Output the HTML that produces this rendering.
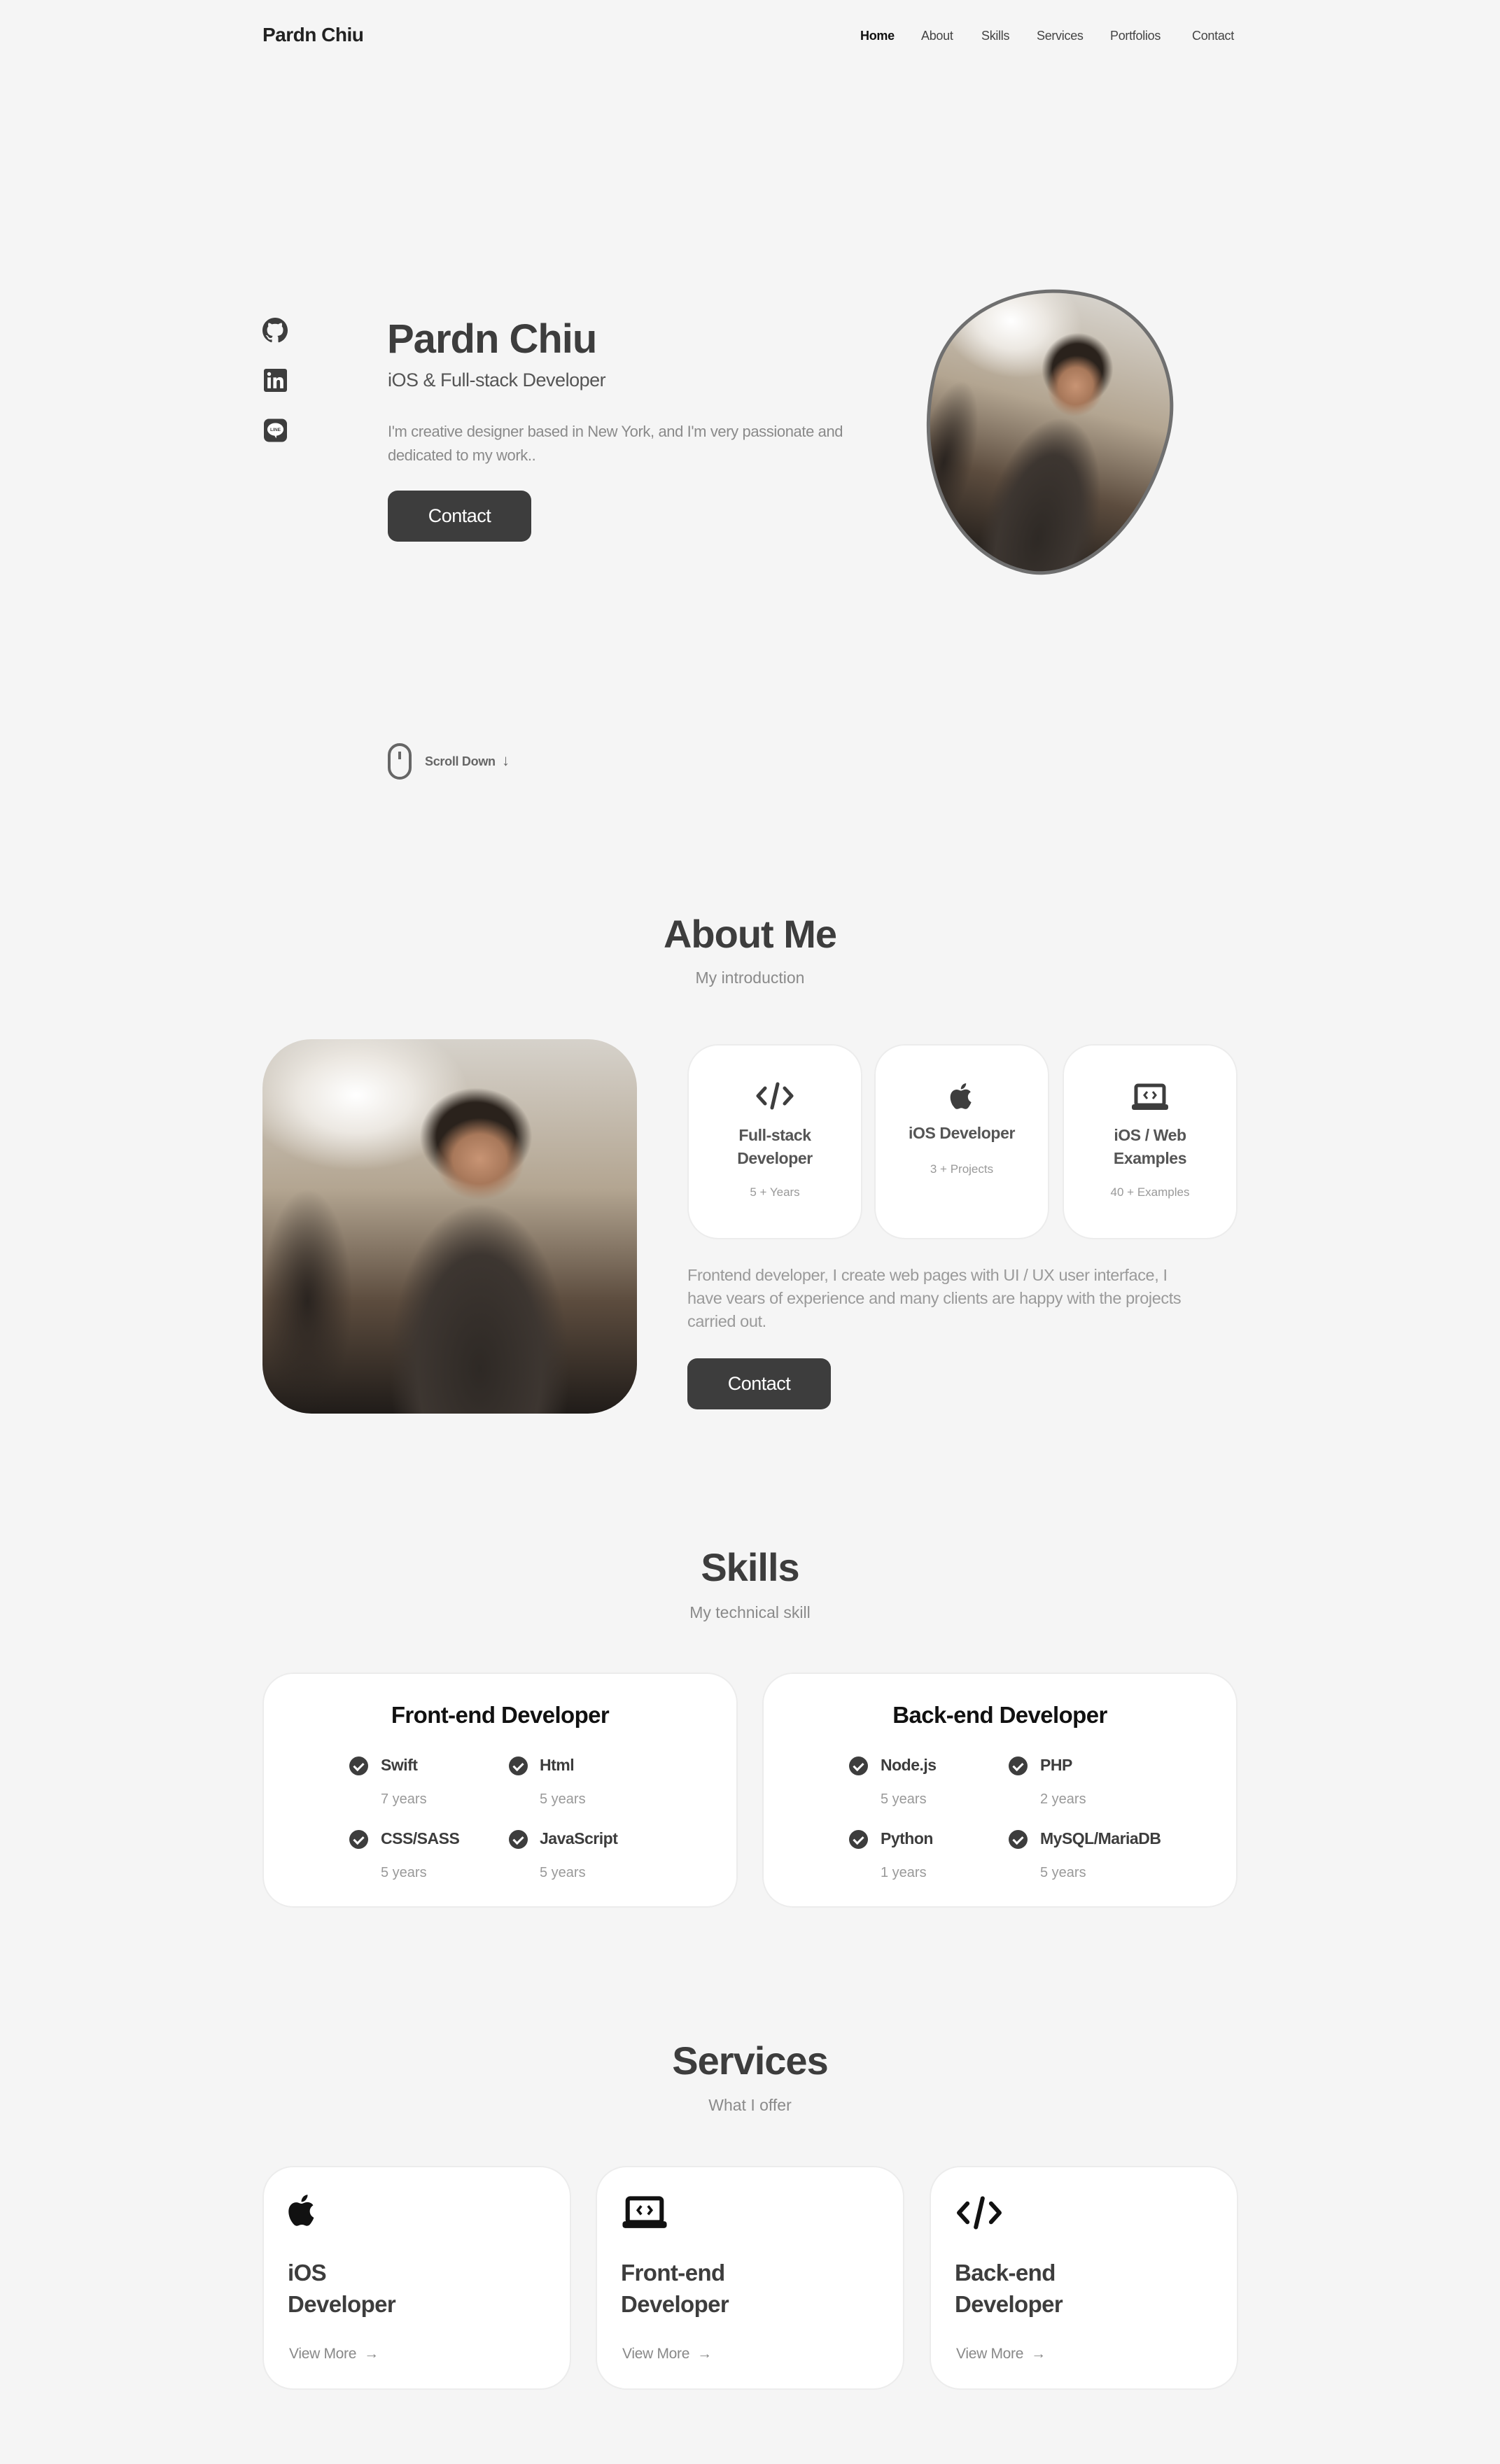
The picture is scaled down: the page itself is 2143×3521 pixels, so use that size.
<!DOCTYPE html>
<html><head><meta charset="utf-8"><style>
*{margin:0;padding:0;box-sizing:border-box}
body{width:2143px;height:3521px;background:#f5f5f5;font-family:"Liberation Sans",sans-serif;color:#3d3d3d;position:relative;overflow:hidden}
.a{position:absolute;white-space:nowrap}
.nav a{position:absolute;top:41px;font-size:18px;color:#444;text-decoration:none;letter-spacing:-0.3px}
.btn{position:absolute;background:#3d3d3d;color:#fff;border-radius:14px;font-size:27px;display:flex;align-items:center;justify-content:center;letter-spacing:-0.5px}
.card{position:absolute;background:#fff;border-radius:44px;border:2px solid #ececec}
.ct{position:absolute;left:0;right:0;text-align:center}
.h2{position:absolute;left:0;width:2143px;text-align:center;font-size:56px;font-weight:bold;letter-spacing:-1px;color:#3d3d3d}
.sub{position:absolute;left:0;width:2143px;text-align:center;font-size:23px;color:#8a8a8a}
.chk{position:absolute;width:27px;height:27px;border-radius:50%;background:#3d3d3d}
.chk:after{content:"";position:absolute;left:9px;top:6px;width:6px;height:11px;border:solid #fff;border-width:0 3px 3px 0;transform:rotate(45deg)}
.sn{position:absolute;font-size:23px;font-weight:bold;color:#3d3d3d;letter-spacing:-0.5px}
.sy{position:absolute;font-size:20px;color:#999}
.photo{background:
radial-gradient(ellipse 12% 11% at 58% 32%,#c89474 0,#a8785a 60%,transparent 100%),
radial-gradient(ellipse 15% 13% at 57% 26%,#2a221c 0,#2a221c 70%,transparent 100%),
radial-gradient(ellipse 30% 55% at 58% 88%,#2e2925 0,#3d3631 55%,transparent 80%),
radial-gradient(ellipse 12% 30% at 12% 70%,#2a2420 0,transparent 100%),
radial-gradient(ellipse 30% 20% at 25% 15%,#fff 0,#ece8e2 50%,transparent 100%),
linear-gradient(180deg,#d6d2cb 0%,#b3a591 40%,#5c4c3e 70%,#201c19 100%)}
</style></head><body>
<div class="a" style="left:375px;top:34px;font-size:28px;font-weight:bold;color:#222;letter-spacing:-0.5px">Pardn Chiu</div>
<div class="nav">
<a style="left:1229px;font-weight:bold;color:#111">Home</a>
<a style="left:1316px">About</a>
<a style="left:1402px">Skills</a>
<a style="left:1481px">Services</a>
<a style="left:1586px">Portfolios</a>
<a style="left:1703px">Contact</a>
</div>

<svg class="a" style="left:375px;top:454px" width="36" height="36" viewBox="0 0 16 16"><path fill="#3d3d3d" d="M8 0C3.58 0 0 3.58 0 8c0 3.54 2.29 6.53 5.47 7.59.4.07.55-.17.55-.38v-1.33c-2.23.48-2.7-1.07-2.7-1.07-.36-.92-.89-1.17-.89-1.17-.73-.5.05-.49.05-.49.81.06 1.23.83 1.23.83.72 1.23 1.88.87 2.34.67.07-.52.28-.87.51-1.07-1.78-.2-3.64-.89-3.64-3.95 0-.87.31-1.59.82-2.150-.08-.2-.36-1.02.08-2.12 0 0 .67-.21 2.2.82a7.6 7.6 0 0 1 4 0c1.53-1.04 2.2-.82 2.2-.82.44 1.1.16 1.92.08 2.12.51.56.82 1.27.82 2.15 0 3.07-1.87 3.75-3.65 3.95.29.25.54.73.54 1.48v2.2c0 .21.15.46.55.38A8 8 0 0 0 16 8c0-4.42-3.58-8-8-8z"/></svg>
<svg class="a" style="left:377px;top:527px" width="33" height="33" viewBox="0 0 16 16"><rect width="16" height="16" rx="1.5" fill="#3d3d3d"/><rect x="2.5" y="6" width="2.3" height="7.5" fill="#fff"/><circle cx="3.65" cy="3.6" r="1.3" fill="#fff"/><path d="M6.5 6h2.2v1c.4-.7 1.2-1.2 2.3-1.2 2 0 2.5 1.2 2.5 3v4.7h-2.3V9.3c0-.9-.2-1.6-1.1-1.6s-1.3.7-1.3 1.6v4.2H6.5z" fill="#fff"/></svg>
<svg class="a" style="left:377px;top:598px" width="33" height="34" viewBox="0 0 16 16"><rect width="16" height="16" rx="3.5" fill="#3d3d3d"/><ellipse cx="8" cy="7.3" rx="5.6" ry="4.4" fill="#fff"/><path d="M7 11l1.5 2.5 .3-2z" fill="#fff"/><text x="8" y="8.6" font-size="3.2" text-anchor="middle" font-family="Liberation Sans" font-weight="bold" fill="#3d3d3d">LINE</text></svg>

<div class="a" style="left:553px;top:451px;font-size:58px;font-weight:bold;letter-spacing:-1px;color:#3d3d3d">Pardn Chiu</div>
<div class="a" style="left:554px;top:528px;font-size:27px;color:#555;letter-spacing:-0.5px">iOS &amp; Full-stack Developer</div>
<div class="a" style="left:554px;top:600px;font-size:22px;color:#8a8a8a;line-height:34px;white-space:normal;width:690px;letter-spacing:-0.4px">I'm creative designer based in New York, and I'm very passionate and dedicated to my work..</div>
<div class="btn" style="left:554px;top:701px;width:205px;height:73px">Contact</div>

<div class="a photo" style="left:1318px;top:410px;width:350px;height:410px;border:5px solid #6f6f6f;border-radius:55% 45% 45% 55% / 40% 42% 58% 60%;transform:rotate(14deg)"></div>

<div class="a" style="left:554px;top:1062px;width:34px;height:52px;border:4px solid #666;border-radius:17px"></div>
<div class="a" style="left:569px;top:1074px;width:4px;height:11px;background:#666"></div>
<div class="a" style="left:607px;top:1078px;font-size:18px;font-weight:bold;color:#666;letter-spacing:-0.3px">Scroll Down</div>
<div class="a" style="left:717px;top:1074px;font-size:22px;color:#666">↓</div>

<div class="h2" style="top:1302px">About Me</div>
<div class="sub" style="top:1384px">My introduction</div>
<div class="a photo" style="left:375px;top:1485px;width:535px;height:535px;border-radius:70px"></div>

<div class="card" style="left:982px;top:1492px;width:250px;height:279px">
<svg class="ct" style="margin:auto;top:52px" width="58" height="40" viewBox="0 0 58 40"><path d="M15 9 5 20l10 11M43 9l10 11-10 11M33 3 25 37" fill="none" stroke="#3d3d3d" stroke-width="5" stroke-linecap="round" stroke-linejoin="round"/></svg>
<div class="ct" style="top:112px;font-size:23px;font-weight:bold;color:#555;line-height:33px;letter-spacing:-0.4px">Full-stack<br>Developer</div>
<div class="ct" style="top:200px;font-size:17px;color:#999">5 + Years</div></div>
<div class="card" style="left:1249px;top:1492px;width:250px;height:279px">
<svg class="ct" style="margin:auto;top:48px" width="48" height="48" viewBox="0 0 24 24"><path fill="#3d3d3d" d="M16.4 12.7c0-2.3 1.9-3.4 2-3.5-1.1-1.6-2.8-1.8-3.4-1.8-1.4-.1-2.8.9-3.5.9-.7 0-1.9-.8-3.1-.8-1.6 0-3 .9-3.8 2.3-1.6 2.8-.4 7 1.2 9.3.8 1.1 1.7 2.4 2.9 2.3 1.2 0 1.6-.7 3-.7s1.8.7 3 .7c1.3 0 2.1-1.1 2.8-2.3.9-1.3 1.3-2.6 1.3-2.6s-2.4-1-2.4-3.8zM14.1 5.9c.6-.8 1.1-1.8 1-2.9-.9 0-2.1.6-2.7 1.4-.6.7-1.1 1.8-1 2.8 1 .1 2.1-.5 2.7-1.3z"/></svg>
<div class="ct" style="top:112px;font-size:23px;font-weight:bold;color:#555;letter-spacing:-0.4px">iOS Developer</div>
<div class="ct" style="top:167px;font-size:17px;color:#999">3 + Projects</div></div>
<div class="card" style="left:1518px;top:1492px;width:250px;height:279px">
<svg class="ct" style="margin:auto;top:54px" width="56" height="40" viewBox="0 0 56 40"><rect x="8" y="3" width="40" height="28" rx="3" fill="none" stroke="#3d3d3d" stroke-width="5"/><rect x="2" y="30" width="52" height="8" rx="3" fill="#3d3d3d"/><path d="M24 12l-4 5 4 5M32 12l4 5-4 5" fill="none" stroke="#3d3d3d" stroke-width="3"/></svg>
<div class="ct" style="top:112px;font-size:23px;font-weight:bold;color:#555;line-height:33px;letter-spacing:-0.4px">iOS / Web<br>Examples</div>
<div class="ct" style="top:200px;font-size:17px;color:#999">40 + Examples</div></div>

<div class="a" style="left:982px;top:1806px;width:740px;white-space:normal;font-size:23.5px;line-height:33px;color:#9a9a9a;letter-spacing:-0.4px">Frontend developer, I create web pages with UI / UX user interface, I have vears of experience and many clients are happy with the projects carried out.</div>
<div class="btn" style="left:982px;top:1941px;width:205px;height:73px">Contact</div>

<div class="h2" style="top:2207px">Skills</div>
<div class="sub" style="top:2291px">My technical skill</div>
<div class="card" style="left:375px;top:2390px;width:679px;height:336px">
<div class="ct" style="top:40px;font-size:33px;font-weight:bold;color:#111;letter-spacing:-0.6px">Front-end Developer</div></div>
<div class="card" style="left:1089px;top:2390px;width:679px;height:336px">
<div class="ct" style="top:40px;font-size:33px;font-weight:bold;color:#111;letter-spacing:-0.6px">Back-end Developer</div></div>

<div class="chk" style="left:499px;top:2510px"></div><div class="sn" style="left:544px;top:2509px">Swift</div><div class="sy" style="left:544px;top:2560px">7 years</div>
<div class="chk" style="left:727px;top:2510px"></div><div class="sn" style="left:771px;top:2509px">Html</div><div class="sy" style="left:771px;top:2560px">5 years</div>
<div class="chk" style="left:499px;top:2615px"></div><div class="sn" style="left:544px;top:2614px">CSS/SASS</div><div class="sy" style="left:544px;top:2665px">5 years</div>
<div class="chk" style="left:727px;top:2615px"></div><div class="sn" style="left:771px;top:2614px">JavaScript</div><div class="sy" style="left:771px;top:2665px">5 years</div>

<div class="chk" style="left:1213px;top:2510px"></div><div class="sn" style="left:1258px;top:2509px">Node.js</div><div class="sy" style="left:1258px;top:2560px">5 years</div>
<div class="chk" style="left:1441px;top:2510px"></div><div class="sn" style="left:1486px;top:2509px">PHP</div><div class="sy" style="left:1486px;top:2560px">2 years</div>
<div class="chk" style="left:1213px;top:2615px"></div><div class="sn" style="left:1258px;top:2614px">Python</div><div class="sy" style="left:1258px;top:2665px">1 years</div>
<div class="chk" style="left:1441px;top:2615px"></div><div class="sn" style="left:1486px;top:2614px">MySQL/MariaDB</div><div class="sy" style="left:1486px;top:2665px">5 years</div>

<div class="h2" style="top:2912px">Services</div>
<div class="sub" style="top:2995px">What I offer</div>

<div class="card" style="left:375px;top:3095px;width:441px;height:320px">
<svg class="a" style="left:26px;top:32px" width="58" height="58" viewBox="0 0 24 24"><path fill="#111" d="M16.4 12.7c0-2.3 1.9-3.4 2-3.5-1.1-1.6-2.8-1.8-3.4-1.8-1.4-.1-2.8.9-3.5.9-.7 0-1.9-.8-3.1-.8-1.6 0-3 .9-3.8 2.3-1.6 2.8-.4 7 1.2 9.3.8 1.1 1.7 2.4 2.9 2.3 1.2 0 1.6-.7 3-.7s1.8.7 3 .7c1.3 0 2.1-1.1 2.8-2.3.9-1.3 1.3-2.6 1.3-2.6s-2.4-1-2.4-3.8zM14.1 5.9c.6-.8 1.1-1.8 1-2.9-.9 0-2.1.6-2.7 1.4-.6.7-1.1 1.8-1 2.8 1 .1 2.1-.5 2.7-1.3z"/></svg>
<div class="a" style="left:34px;top:128px;font-size:33px;font-weight:bold;color:#3d3d3d;line-height:45px;letter-spacing:-0.6px">iOS<br>Developer</div>
<div class="a" style="left:36px;top:255px;font-size:21px;color:#888;letter-spacing:-0.3px">View More &nbsp;→</div></div>

<div class="card" style="left:851px;top:3095px;width:441px;height:320px">
<svg class="a" style="left:34px;top:40px" width="68" height="50" viewBox="0 0 56 40"><rect x="8" y="3" width="40" height="28" rx="3" fill="none" stroke="#111" stroke-width="5"/><rect x="2" y="30" width="52" height="8" rx="3" fill="#111"/><path d="M24 12l-4 5 4 5M32 12l4 5-4 5" fill="none" stroke="#111" stroke-width="3"/></svg>
<div class="a" style="left:34px;top:128px;font-size:33px;font-weight:bold;color:#3d3d3d;line-height:45px;letter-spacing:-0.6px">Front-end<br>Developer</div>
<div class="a" style="left:36px;top:255px;font-size:21px;color:#888;letter-spacing:-0.3px">View More &nbsp;→</div></div>

<div class="card" style="left:1328px;top:3095px;width:441px;height:320px">
<svg class="a" style="left:34px;top:40px" width="70" height="50" viewBox="0 0 58 40"><path d="M15 9 5 20l10 11M43 9l10 11-10 11M33 3 25 37" fill="none" stroke="#111" stroke-width="5" stroke-linecap="round" stroke-linejoin="round"/></svg>
<div class="a" style="left:34px;top:128px;font-size:33px;font-weight:bold;color:#3d3d3d;line-height:45px;letter-spacing:-0.6px">Back-end<br>Developer</div>
<div class="a" style="left:36px;top:255px;font-size:21px;color:#888;letter-spacing:-0.3px">View More &nbsp;→</div></div>
</body></html>
